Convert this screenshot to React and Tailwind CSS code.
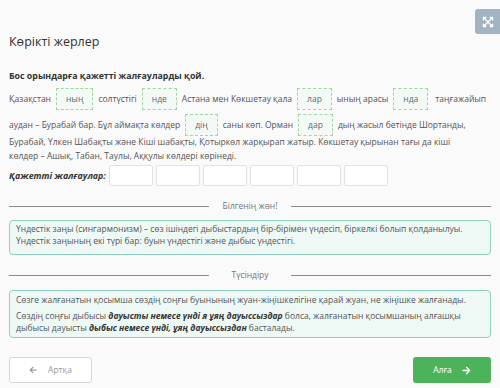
import React from "react";
import { FaArrowLeft, FaArrowRight, FaExpandArrowsAlt } from "react-icons/fa";

const Blank = ({ children }) => (
  <span className="inline-flex h-[22px] shrink-0 items-center justify-center border border-dashed border-[#9fd89f] bg-[#f3faf5] px-[9px] text-[#5b6b7a]">
    {children}
  </span>
);

const Divider = ({ label }) => (
  <div className="flex items-center">
    <div className="h-px flex-1 bg-[#8a8a8a]" />
    <div className="w-[82px] text-center text-[#777]">{label}</div>
    <div className="h-px flex-1 bg-[#8a8a8a]" />
  </div>
);

export default function App() {
  return (
    <div
      className="relative h-[388px] w-[500px] overflow-hidden whitespace-nowrap bg-[#fafafa] text-[8.5px] leading-[14px] text-[#555]"
      style={{ fontFamily: '"Open Sans", "Noto Sans", sans-serif' }}
    >
      <div className="absolute right-[-4px] top-[9px] flex h-[25px] w-[29px] items-center justify-center rounded-[3px] bg-[#a2b3c1] text-white">
        <FaExpandArrowsAlt className="mr-[4px] h-[12px] w-[12px]" />
      </div>

      <div className="px-[9px]">
        <div className="pt-[34px] text-[12.5px] leading-[16px] text-[#333]">Көрікті жерлер</div>

        <div className="mt-[19px] text-[8.8px] font-bold text-[#333]">Бос орындарға қажетті жалғауларды қой.</div>

        <div className="mt-[5px] flex items-center gap-[5px]">
          <span>Қазақстан</span>
          <Blank>ның</Blank>
          <span>солтүстігі</span>
          <Blank>нде</Blank>
          <span>Астана мен Көкшетау қала</span>
          <Blank>лар</Blank>
          <span>ының арасы</span>
          <Blank>нда</Blank>
          <span className="ml-[2px]">таңғажайып</span>
        </div>
        <div className="mt-[4px] flex items-center gap-[5px]">
          <span>аудан – Бурабай бар. Бұл аймақта көлдер</span>
          <Blank>дің</Blank>
          <span>саны көп. Орман</span>
          <Blank>дар</Blank>
          <span>дың жасыл бетінде Шортанды,</span>
        </div>
        <div className="mt-[-1px]">
          Бурабай, Үлкен Шабақты және Кіші шабақты, Қотыркөл жарқырап жатыр. Көкшетау қырынан тағы да кіші
          <br />
          көлдер – Ашық, Табан, Таулы, Аққулы көлдері көрінеді.
        </div>

        <div className="mt-[2px] flex items-center">
          <span className="w-[100px] text-[8.8px] font-bold italic text-[#333]">Қажетті жалғаулар:</span>
          <div className="flex gap-[3px]">
            {[0, 1, 2, 3, 4, 5].map((i) => (
              <div key={i} className="h-[21px] w-[44px] rounded-[2px] border border-[#e2e2e2] bg-white" />
            ))}
          </div>
        </div>

        <div className="mt-[13px]">
          <Divider label="Білгенің жөн!" />
        </div>

        <div className="mt-[7px] rounded-[4px] border border-[#8fd1bf] bg-[#eef9f5] px-[6px] pb-[8px] pt-[2px] leading-[11.5px]">
          Үндестік заңы (сингармонизм) – сөз ішіндегі дыбыстардың бір-бірімен үндесіп, біркелкі болып қолданылуы.
          <br />
          Үндестік заңының екі түрі бар: буын үндестігі және дыбыс үндестігі.
        </div>

        <div className="mt-[13px]">
          <Divider label="Түсіндіру" />
        </div>

        <div className="mt-[8px] rounded-[4px] border border-[#8fd1bf] bg-[#eef9f5] px-[6px] pb-[3px] pt-[3px] leading-[12px]">
          <p>Сөзге жалғанатын қосымша сөздің соңғы буынының жуан-жіңішкелігіне қарай жуан, не жіңішке жалғанады.</p>
          <p className="mt-[4px]">
            Сөздің соңғы дыбысы <b className="italic text-[#333]">дауысты немесе үнді я ұяң дауыссыздар</b> болса, жалғанатын қосымшаның алғашқы
            <br />
            дыбысы дауысты <b className="italic text-[#333]">дыбыс немесе үнді, ұяң дауыссыздан</b> басталады.
          </p>
        </div>

        <div className="mt-[19px] flex items-center justify-between">
          <div className="flex h-[26px] w-[83px] items-center justify-center gap-[11px] rounded-[3px] border border-[#d6d6d6] bg-white text-[#9a9a9a]">
            <FaArrowLeft className="h-[8px] w-[8px]" />
            <span>Артқа</span>
          </div>
          <div className="flex h-[26px] w-[78px] items-center justify-center gap-[10px] rounded-[3px] bg-[#4db35a] text-white">
            <span>Алға</span>
            <FaArrowRight className="h-[9px] w-[9px]" />
          </div>
        </div>
      </div>
    </div>
  );
}
